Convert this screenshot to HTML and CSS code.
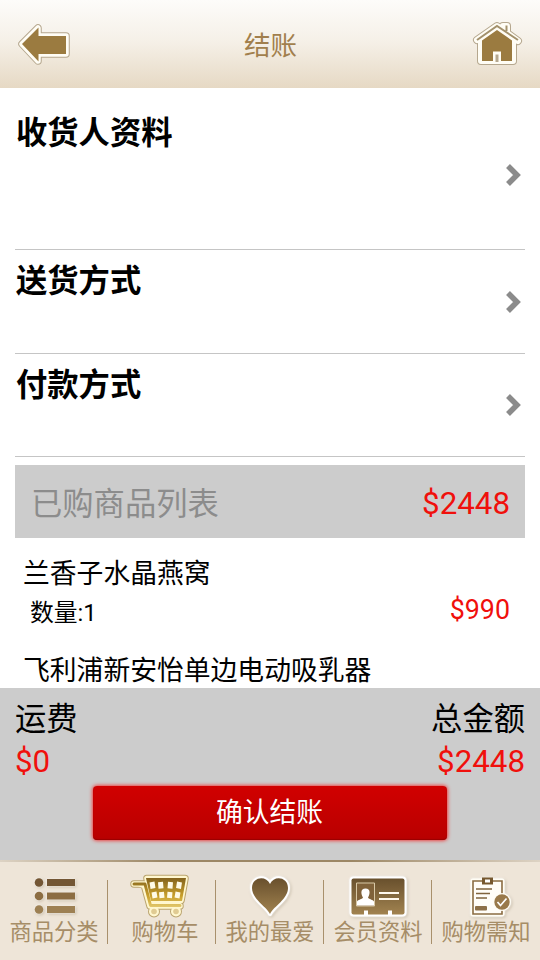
FILE: index.html
```html
<!DOCTYPE html>
<html lang="zh-CN">
<head>
<meta charset="utf-8">
<title>结账</title>
<link rel="stylesheet" href="styles.css">
</head>
<body>
<div class="app">
  <header class="topbar">
    <svg class="back" width="56" height="44" viewBox="0 0 56 44">
      <g stroke-linejoin="round">
        <path d="M5 22 21 6v8h28v18H21v7Z" fill="#b5a78e" stroke="#b5a78e" stroke-width="7.500"/>
        <path d="M5 22 21 6v8h28v18H21v7Z" fill="#fffdf5" stroke="#fffdf5" stroke-width="5.500"/>
      </g>
      <path d="M5 22 21.500 5.500V14H49v18H21.500v7.500Z" fill="#9b7b40"/>
    </svg>
    <h1>结账</h1>
    <svg class="home" width="52" height="50" viewBox="0 0 52 50">
      <g stroke-linejoin="round" stroke-linecap="round">
        <path d="M6 21 26 7l6 4V7h4v7l11 8M10 20v22h32V20L26 8Z" fill="#b5a78e" stroke="#b5a78e" stroke-width="8"/>
        <path d="M6 21 26 7l6 4V7h4v7l11 8M10 20v22h32V20L26 8Z" fill="#fffdf5" stroke="#fffdf5" stroke-width="6"/>
      </g>
      <path d="M6 21 26 7l21 14M35.500 12V6.500" fill="none" stroke="#a3916c" stroke-width="2"/>
      <path d="M26 11 11 21.500V42h11V32.500h8V42h11V21.500Z" fill="#9b7b40"/>
      <path d="M24.500 43v-7.500h3V43Z" fill="#b5a78e"/>
    </svg>
  </header>
  <main class="content">
    <section class="option address"><h2>收货人资料</h2><svg class="chevron" width="17" height="24" viewBox="0 0 17 24"><path d="m3 3 9 9-9 9"/></svg></section>
    <section class="option"><h2>送货方式</h2><svg class="chevron" width="17" height="24" viewBox="0 0 17 24"><path d="m3 3 9 9-9 9"/></svg></section>
    <section class="option"><h2>付款方式</h2><svg class="chevron" width="17" height="24" viewBox="0 0 17 24"><path d="m3 3 9 9-9 9"/></svg></section>
    <div class="list-head"><span>已购商品列表</span><span class="price">$2448</span></div>
    <article class="item">
      <h3>兰香子水晶燕窝</h3>
      <div class="item-row"><span class="qty">数量:1</span><span class="price">$990</span></div>
    </article>
    <article class="item"><h3>飞利浦新安怡单边电动吸乳器</h3></article>
  </main>
  <section class="summary">
    <div class="totals"><span>运费</span><span>总金额</span></div>
    <div class="totals price"><span>$0</span><span>$2448</span></div>
    <button class="confirm">确认结账</button>
  </section>
  <nav class="tabs">
    <svg width="0" height="0" class="defs"><defs>
      <linearGradient id="brown" x1="0" y1="0" x2="0" y2="1"><stop offset="0" stop-color="#69502d"/><stop offset="1" stop-color="#a18350"/></linearGradient>
      <linearGradient id="gold" gradientUnits="userSpaceOnUse" x1="0" y1="4" x2="0" y2="36"><stop offset="0" stop-color="#80601c"/><stop offset=".6" stop-color="#c9a02c"/><stop offset="1" stop-color="#e6cf78"/></linearGradient>
    </defs></svg>
    <a class="tab">
      <svg width="60" height="46" viewBox="0 0 60 46"><g class="halo"><g fill="#735634"><circle cx="15" cy="9.500" r="4.300"/><path d="M23 6h28v7H23z"/></g><g fill="#8c6d42"><circle cx="15" cy="23" r="4.300"/><path d="M23 19.500h28v7H23z"/></g><g fill="#9d8053"><circle cx="15" cy="36.500" r="4.300"/><path d="M23 33h28v7H23z"/></g></g></svg>
      <span>商品分类</span>
    </a>
    <a class="tab cart">
      <svg width="60" height="46" viewBox="0 0 60 46">
        <g stroke-linejoin="round" stroke-linecap="round">
          <path d="M2 11h10l6 22h30M15 5.500h38l-4 22H20Z" fill="#baa46f" stroke="#baa46f" stroke-width="7.500"/>
          <g fill="#baa46f"><circle cx="22" cy="38.500" r="6"/><circle cx="44" cy="38.500" r="6"/></g>
          <path d="M2 11h10l6 22h30M15 5.500h38l-4 22H20Z" fill="#fff7cf" stroke="#fff7cf" stroke-width="5.500"/>
          <g fill="#fff7cf"><circle cx="22" cy="38.500" r="5"/><circle cx="44" cy="38.500" r="5"/></g>
          <g fill="#e0cb92"><circle cx="22" cy="38.500" r="2.800"/><circle cx="44" cy="38.500" r="2.800"/></g>
          <path d="M2 11h11l5.500 21.500H48" fill="none" stroke="url(#gold)" stroke-width="3"/>
        </g>
        <path d="M14 5h40l-4 23H19Z" fill="url(#gold)"/>
        <path d="m20 9 1 6.500M28.500 9l.5 6.500M38.500 9l-.500 6.500M47.500 9l-1 6.500M22 19l1 6M29.500 19l.5 6M38 19l-.5 6M46 19l-1 6" stroke="#fffbe7" stroke-width="5"/>
      </svg>
      <span>购物车</span>
    </a>
    <a class="tab">
      <svg width="60" height="46" viewBox="0 0 60 46"><path class="halo" d="M30 41C26 33 12 26 12 15c0-11 14-13 18-4 4-9 18-7 18 4 0 11-14 18-18 26Z" fill="url(#brown)" stroke="#fff" stroke-width="4" paint-order="stroke" stroke-linejoin="round"/></svg>
      <span>我的最爱</span>
    </a>
    <a class="tab">
      <svg width="60" height="46" viewBox="0 0 60 46"><g class="halo"><rect x="3.500" y="5.500" width="53" height="36" rx="2" fill="url(#brown)" stroke="#fff" stroke-width="4" paint-order="stroke"/></g><path d="M8.500 10h18v23h-18z" fill="#80623a" stroke="#d8c8a6"/><path d="M9 32.500v-4c1-2 5-2 6-4-2-3-3-9 2.500-9s4.500 6 2.500 9c1 2 5 2 6 4v4Z" fill="#fff"/><path d="M31 20h20M31 26h20" stroke="#fff8ec" stroke-width="2.200"/><path d="M16 37.500h4v5h-4zm24 0h4v5h-4z" fill="#fff"/></svg>
      <span>会员资料</span>
    </a>
    <a class="tab">
      <svg width="60" height="46" viewBox="-3 0 60 46"><g class="halo"><path d="M14 8h29v33H14Z" fill="#fffdf5" stroke="#fffdf5" stroke-width="5" stroke-linejoin="round"/><path d="M14 8h29v33H14Z" fill="#fffdf8" stroke="#8b6c42" stroke-width="1.600"/><path d="M23 4.500h11v7H23z" fill="#76582f"/><path d="M26 6.500h5v3h-5z" fill="#fff"/><path d="M17 16h16M17 20.500h14M17 25h11" stroke="#80643e" stroke-width="1.300"/><rect x="16" y="33" width="12" height="4.500" rx="1" fill="#8d7048"/><circle cx="43" cy="29" r="9" fill="#fffdf5"/><circle cx="43" cy="29" r="7.700" fill="#99794a"/><path d="m38.500 29 3 3.500 6-7" fill="none" stroke="#fff" stroke-width="1.700"/></g></svg>
      <span>购物需知</span>
    </a>
  </nav>
</div>
</body>
</html>
```
FILE: styles.css
```css
* { box-sizing: border-box; }
body { margin: 0; background: #fff; color: #000; font-family: Roboto, "Noto Sans CJK SC", sans-serif; }
h1, h2, h3 { margin: 0; font-weight: 400; }
.app { width: 540px; height: 960px; display: flex; flex-direction: column; overflow: hidden; }
.topbar { flex: none; height: 88px; display: flex; align-items: center; justify-content: space-between; padding: 0 17px; background: linear-gradient(#fdfcfa, #f5f0e7 48%, #e6d9c4); }
.topbar h1 { padding: 3px 3px 0 0; color: #a17f4d; font-size: 26.5px; line-height: 36px; }
.content { flex: 1; min-height: 0; padding: 12px 15px 0; overflow: hidden; }
.option { height: 103.500px; display: flex; align-items: center; justify-content: space-between; border-bottom: 1.500px solid #c5c5c5; }
.option h2 { align-self: flex-start; padding: 14px 0 0 1px; font-size: 31.300px; line-height: 36px; font-weight: 700; }
.address { height: 150px; }
.address h2 { padding-top: 16px; }
.chevron { margin: 1px 3px 0 0; fill: none; stroke: #8b8b8b; stroke-width: 5.500; }
.list-head { margin-top: 8px; height: 73px; padding: 0 15px 0 16px; display: flex; align-items: center; justify-content: space-between; background: #ccc; color: #8c8c8c; font-size: 31.300px; }
.list-head .price { padding-top: 3px; }
.price { color: #f0100c; }
.item { height: 97px; padding: 18px 15px 0 8px; }
.item h3 { font-size: 26.800px; line-height: 36px; white-space: nowrap; }
.item-row { display: flex; align-items: center; justify-content: space-between; height: 36px; padding-left: 7px; }
.qty { font-size: 23.800px; }
.item-row .price { font-size: 26.800px; }
.summary { flex: none; height: 173px; padding: 11px 15px 0; display: flex; flex-direction: column; background: #ccc; font-size: 31.300px; }
.totals { display: flex; justify-content: space-between; line-height: 42px; }
.confirm { align-self: center; margin-top: 3px; width: 354px; height: 54px; padding: 0 1px 6px 0; border: 0; border-radius: 4px; background: linear-gradient(#d10000, #b80000); box-shadow: 0 0 4px #f00, inset 0 -1px 1px #900; color: #fff; font: 400 26.800px Roboto, "Noto Sans CJK SC", sans-serif; }
.tabs { flex: none; position: relative; height: 99px; display: flex; background: #eee5d8; }
.tabs::before { content: ""; position: absolute; left: 0; right: 0; top: -1px; height: 2px; background: linear-gradient(90deg, #ddd3c4, #9c8765 30%, #9c8765 65%, #ddd3c4); }
.defs { position: absolute; }
.tab { width: 108px; padding-top: 12px; display: flex; flex-direction: column; align-items: center; position: relative; color: #a68d67; font-size: 22.300px; line-height: 26px; font-weight: 400; white-space: nowrap; }
.tab svg { flex: none; overflow: visible; }
.cart span { padding-left: 6px; }
.tab + .tab::before { content: ""; position: absolute; left: -1px; top: 19px; height: 64px; width: 1px; background: #a8906c; }
.halo { filter: drop-shadow(0 0 1px #fff) drop-shadow(1px 1px 1px #c9bda9); }
```
